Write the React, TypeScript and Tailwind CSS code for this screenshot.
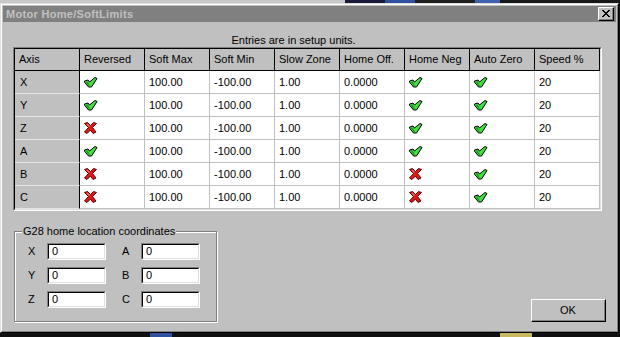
import React from "react";

const Check = () => (
  <svg width="14" height="11" viewBox="0 0 14 11">
    <polygon
      points="0.5,4 4,3 5.5,5 11,0.5 13,1.5 7.5,10 4.5,10 0.5,5.2"
      fill="#3fe03f"
      stroke="#000"
      strokeWidth="1"
      strokeLinejoin="round"
    />
    <polygon points="1.5,4.8 4.5,8.8 6,8.8 3.5,4.5" fill="#1f9a1f" />
  </svg>
);

const Cross = () => (
  <svg width="13" height="12" viewBox="0 0 13 12">
    <polygon
      points="0.5,1.5 3.5,0.5 6.5,3.5 9.5,0.5 12.5,1.5 8.5,5.5 12,10 9,11.5 6.5,8 3,11.5 0.5,10 4.5,5.5"
      fill="#e01818"
      stroke="#5a0000"
      strokeWidth="1"
      strokeLinejoin="round"
    />
    <polygon points="2,2 4,2 6,4 5,5" fill="#ff6a6a" />
  </svg>
);

type V = "c" | "x";
const rows: { axis: string; rev: V; neg: V; auto: V }[] = [
  { axis: "X", rev: "c", neg: "c", auto: "c" },
  { axis: "Y", rev: "c", neg: "c", auto: "c" },
  { axis: "Z", rev: "x", neg: "c", auto: "c" },
  { axis: "A", rev: "c", neg: "c", auto: "c" },
  { axis: "B", rev: "x", neg: "x", auto: "c" },
  { axis: "C", rev: "x", neg: "x", auto: "c" },
];

const headers = [
  "Axis",
  "Reversed",
  "Soft Max",
  "Soft Min",
  "Slow Zone",
  "Home Off.",
  "Home Neg",
  "Auto Zero",
  "Speed %",
];

const Icon = ({ v }: { v: V }) => (v === "c" ? <Check /> : <Cross />);

const HeadCell = ({ children }: { children: React.ReactNode }) => (
  <div className="h-[22px] flex items-center pl-[4px] bg-[#c0c0c0] border-r border-b border-black">
    {children}
  </div>
);

const Cell = ({ children }: { children: React.ReactNode }) => (
  <div className="h-[23px] flex items-center pl-[4px] bg-white border-r border-b border-[#c0c0c0]">
    {children}
  </div>
);

const AxisCell = ({ children }: { children: React.ReactNode }) => (
  <div className="h-[23px] flex items-center pl-[5px] bg-[#c0c0c0] border-r border-r-black border-b border-b-[#e4e4e4]">
    {children}
  </div>
);

const Field = ({ label }: { label: string }) => (
  <>
    <div className="w-[19px] h-[17px] flex items-center">{label}</div>
    <div className="w-[59px] h-[17px] border-t border-l border-[#808080] border-r border-b border-r-white border-b-white">
      <div className="w-full h-full border-t border-l border-black border-r border-b border-r-[#dfdfdf] border-b-[#dfdfdf] bg-white flex items-center pl-[3px]">
        0
      </div>
    </div>
  </>
);

export default function App() {
  return (
    <div
      className="w-[620px] h-[337px] overflow-hidden bg-[#101010] flex flex-col text-[11px] text-black"
      style={{ fontFamily: '"Liberation Sans", Arial, sans-serif' }}
    >
      {/* strip of what lies behind the dialog, top */}
      <div className="h-[3px] flex shrink-0">
        <div className="w-[345px] bg-[#c8c8c8]" />
        <div className="w-[40px] bg-[#1a1a3a]" />
        <div className="w-[30px] bg-[#3050a0]" />
        <div className="w-[60px] bg-[#202020]" />
        <div className="w-[25px] bg-[#4060b0]" />
        <div className="flex-1 bg-[#181818]" />
      </div>

      {/* dialog window */}
      <div className="w-[619px] h-[330px] shrink-0 border-t border-l border-[#dfdfdf] border-r border-b border-r-black border-b-black">
        <div className="w-full h-full border-t border-l border-white border-r border-b border-r-[#808080] border-b-[#808080] bg-[#c0c0c0] p-[1px] flex flex-col">
          {/* title bar */}
          <div className="h-[16px] bg-[#808080] flex items-center justify-between pl-[3px] pr-[2px] shrink-0">
            <span className="font-bold text-[#c0c0c0] tracking-[0.3px] leading-none">
              Motor Home/SoftLimits
            </span>
            <div className="w-[16px] h-[14px] border-t border-l border-white border-r border-b border-r-black border-b-black">
              <div className="w-full h-full border-r border-b border-[#808080] bg-[#c0c0c0] flex items-center justify-center">
                <svg width="8" height="7" viewBox="0 0 8 7" shapeRendering="crispEdges">
                  <path
                    d="M0 0h2v1h-2zM6 0h2v1h-2zM1 1h2v1h-2zM5 1h2v1h-2zM2 2h4v1h-4zM3 3h2v1h-2zM2 4h4v1h-4zM1 5h2v1h-2zM5 5h2v1h-2zM0 6h2v1h-2zM6 6h2v1h-2z"
                    fill="#000"
                  />
                </svg>
              </div>
            </div>
          </div>

          {/* body */}
          <div className="flex-1 flex flex-col pl-[10px]">
            <div className="mt-[12px] h-[13px] leading-[13px] text-center w-[561px]">
              Entries are in setup units.
            </div>

            {/* grid */}
            <div className="w-[589px] border-t border-l border-[#808080] border-r border-b border-r-white border-b-white">
              <div className="border-t border-l border-black border-r border-b border-r-[#dfdfdf] border-b-[#dfdfdf]">
                <div className="grid grid-cols-[repeat(9,65px)]">
                  {headers.map((h) => (
                    <HeadCell key={h}>{h}</HeadCell>
                  ))}
                  {rows.map((r) => (
                    <React.Fragment key={r.axis}>
                      <AxisCell>{r.axis}</AxisCell>
                      <Cell>
                        <Icon v={r.rev} />
                      </Cell>
                      <Cell>100.00</Cell>
                      <Cell>-100.00</Cell>
                      <Cell>1.00</Cell>
                      <Cell>0.0000</Cell>
                      <Cell>
                        <Icon v={r.neg} />
                      </Cell>
                      <Cell>
                        <Icon v={r.auto} />
                      </Cell>
                      <Cell>20</Cell>
                    </React.Fragment>
                  ))}
                </div>
              </div>
            </div>

            {/* lower area */}
            <div className="flex items-start justify-between pr-[10px]">
              <div className="ml-[1px] mt-[20px] w-[203px] h-[91px] relative border border-[#808080] shadow-[1px_1px_0_#ffffff,inset_1px_1px_0_#ffffff]">
                <span className="absolute -top-[7px] left-[7px] px-[1px] bg-[#c0c0c0] leading-[13px]">
                  G28 home location coordinates
                </span>
                <div className="pt-[11px] pl-[13px] flex flex-col gap-[7px]">
                  <div className="flex items-center">
                    <Field label="X" />
                    <div className="w-[16px]" />
                    <Field label="A" />
                  </div>
                  <div className="flex items-center">
                    <Field label="Y" />
                    <div className="w-[16px]" />
                    <Field label="B" />
                  </div>
                  <div className="flex items-center">
                    <Field label="Z" />
                    <div className="w-[16px]" />
                    <Field label="C" />
                  </div>
                </div>
              </div>

              <div className="mt-[88px] w-[75px] h-[23px] border-t border-l border-white border-r border-b border-r-black border-b-black">
                <div className="w-full h-full border-r border-b border-[#808080] flex items-center justify-center bg-[#c0c0c0]">
                  OK
                </div>
              </div>
            </div>
          </div>
        </div>
      </div>

      {/* strip of what lies behind the dialog, bottom */}
      <div className="flex-1 flex">
        <div className="w-[150px] bg-[#101010]" />
        <div className="w-[22px] bg-[#3050a0]" />
        <div className="w-[328px] bg-[#101010]" />
        <div className="w-[32px] bg-[#c8b860]" />
        <div className="flex-1 bg-[#101010]" />
      </div>
    </div>
  );
}
